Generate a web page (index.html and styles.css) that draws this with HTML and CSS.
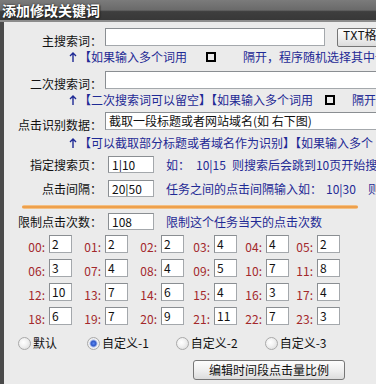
FILE: index.html
```html
<!DOCTYPE html>
<html lang="zh-CN">
<head>
<meta charset="utf-8">
<title>添加修改关键词</title>
<link rel="stylesheet" href="styles.css">
</head>
<body>
<div class="win">
  <div class="titlebar">添加修改关键词</div>
  <div class="panel">
    <div class="row r1">
      <span class="lbl low">主搜索词：</span>
      <span class="field f-main"></span>
      <span class="btn btn-txt">TXT格式</span>
    </div>
    <div class="hint h1"><svg class="arr" width="12" height="12" viewBox="0 0 12 12"><path d="M6 11V2M3 5l3-3 3 3" fill="none" stroke="#1f2a95" stroke-width="1.4"/></svg>【如果输入多个词用<span class="sq sq1"></span><span class="after a1">隔开，程序随机选择其中一</span></div>
    <div class="row r3">
      <span class="lbl low">二次搜索词：</span>
      <span class="field f-long"></span>
    </div>
    <div class="hint h2"><svg class="arr" width="12" height="12" viewBox="0 0 12 12"><path d="M6 11V2M3 5l3-3 3 3" fill="none" stroke="#1f2a95" stroke-width="1.4"/></svg>【二次搜索词可以留空】【如果输入多个词用<span class="sq sq2"></span><span class="after a2">隔开</span></div>
    <div class="row r5">
      <span class="lbl low">点击识别数据：</span>
      <span class="field f-long">截取一段标题或者网站域名(如 右下图)</span>
    </div>
    <div class="hint h3"><svg class="arr" width="12" height="12" viewBox="0 0 12 12"><path d="M6 11V2M3 5l3-3 3 3" fill="none" stroke="#1f2a95" stroke-width="1.4"/></svg>【可以截取部分标题或者域名作为识别】【如果输入多个</div>
    <div class="row r7">
      <span class="lbl">指定搜索页：</span>
      <span class="field f-small">1|10</span>
      <span class="blue note">如：<span class="num">10|15</span>则搜索后会跳到10页开始搜</span>
    </div>
    <div class="row r8">
      <span class="lbl">点击间隔：</span>
      <span class="field f-small">20|50</span>
      <span class="blue note">任务之间的点击间隔输入如：<span class="num n2">10|30</span><span class="gap">则</span></span>
    </div>
    <div class="rule"></div>
    <div class="row r9">
      <span class="lbl">限制点击次数：</span>
      <span class="field f-small">108</span>
      <span class="blue note">限制这个任务当天的点击次数</span>
    </div>
    <div class="grid">
      <div class="cell"><span class="hr">00:</span><span class="field f-h">2</span></div>
      <div class="cell"><span class="hr">01:</span><span class="field f-h">2</span></div>
      <div class="cell"><span class="hr">02:</span><span class="field f-h">2</span></div>
      <div class="cell"><span class="hr">03:</span><span class="field f-h">4</span></div>
      <div class="cell"><span class="hr">04:</span><span class="field f-h">4</span></div>
      <div class="cell"><span class="hr">05:</span><span class="field f-h">2</span></div>
      <div class="cell"><span class="hr">06:</span><span class="field f-h">3</span></div>
      <div class="cell"><span class="hr">07:</span><span class="field f-h">4</span></div>
      <div class="cell"><span class="hr">08:</span><span class="field f-h">4</span></div>
      <div class="cell"><span class="hr">09:</span><span class="field f-h">5</span></div>
      <div class="cell"><span class="hr">10:</span><span class="field f-h">7</span></div>
      <div class="cell"><span class="hr">11:</span><span class="field f-h">8</span></div>
      <div class="cell"><span class="hr">12:</span><span class="field f-h">10</span></div>
      <div class="cell"><span class="hr">13:</span><span class="field f-h">7</span></div>
      <div class="cell"><span class="hr">14:</span><span class="field f-h">6</span></div>
      <div class="cell"><span class="hr">15:</span><span class="field f-h">4</span></div>
      <div class="cell"><span class="hr">16:</span><span class="field f-h">3</span></div>
      <div class="cell"><span class="hr">17:</span><span class="field f-h">4</span></div>
      <div class="cell"><span class="hr">18:</span><span class="field f-h">6</span></div>
      <div class="cell"><span class="hr">19:</span><span class="field f-h">7</span></div>
      <div class="cell"><span class="hr">20:</span><span class="field f-h">9</span></div>
      <div class="cell"><span class="hr">21:</span><span class="field f-h">11</span></div>
      <div class="cell"><span class="hr">22:</span><span class="field f-h">7</span></div>
      <div class="cell"><span class="hr">23:</span><span class="field f-h">3</span></div>
    </div>
    <div class="radios">
      <span class="opt o1"><span class="radio"></span>默认</span>
      <span class="opt"><span class="radio on"></span>自定义-1</span>
      <span class="opt"><span class="radio"></span>自定义-2</span>
      <span class="opt"><span class="radio"></span>自定义-3</span>
    </div>
    <div class="btn btn-edit">编辑时间段点击量比例</div>
  </div>
</div>
</body>
</html>
```

FILE: styles.css
```css
* { box-sizing: border-box; margin: 0; padding: 0; }
html, body { width: 376px; height: 384px; overflow: hidden; background: #ebebeb; }
body {
  font-family: "Noto Sans CJK SC", "Liberation Sans", sans-serif;
  font-size: 12px;
  color: #111;
}
.win { width: 376px; height: 384px; display: flex; flex-direction: column; overflow: hidden; }
.titlebar {
  height: 22px;
  line-height: 20px;
  padding-left: 2px;
  color: #fff;
  font-size: 14px;
  font-weight: bold;
  text-shadow: 0 0 2px #222, 1px 1px 1px #222;
  background: linear-gradient(#7b7b7b 0, #6a6a6a 50%, #3e3e3e 58%, #383838 100%);
  border-bottom: 2px solid #8c8c8c;
}
.panel {
  flex: 1;
  background: #ebebeb;
  border-left: 4px solid #4a4a4a;
  display: flex;
  flex-direction: column;
  white-space: nowrap;
  overflow: hidden;
}
.row { display: flex; align-items: center; height: 18px; flex: none; }
.lbl { width: 98px; flex: none; text-align: right; line-height: 14px; color: #111; }
.lbl.low { padding-top: 8px; }
.field {
  flex: none;
  display: block;
  height: 100%;
  background: #fff;
  border: 1px solid #a4a8ac;
  border-top-color: #8a8e92;
  border-left-color: #8a8e92;
  padding-left: 3px;
  line-height: 15px;
  color: #111;
  overflow: hidden;
}
.f-main { width: 220px; margin-left: 3px; }
.f-long { width: 290px; margin-left: 3px; }
.f-small { width: 46px; margin-left: 6px; }
.btn {
  flex: none;
  background: linear-gradient(#fdfdfd, #eeeeee 55%, #dcdcdc);
  border: 1px solid #767676;
  border-radius: 2px;
  color: #111;
  text-align: center;
}
.btn-txt {
  margin-left: 12px;
  width: 62px;
  height: 19px;
  line-height: 17px;
  text-align: left;
  padding-left: 5px;
  font-family: "Liberation Mono", "Noto Sans CJK SC", monospace;
}
.blue { color: #1f2a95; }
.hint {
  flex: none;
  height: 14px;
  line-height: 14px;
  padding-left: 63px;
  color: #1f2a95;
  display: flex;
  align-items: center;
}
.arr { display: block; flex: none; width: 12px; height: 12px; }
.sq { display: inline-block; width: 10px; height: 10px; border: 2px solid #000; flex: none; }
.sq1 { margin-left: 19px; }
.a1 { margin-left: 27px; }
.sq2 { margin-left: 12px; }
.a2 { margin-left: 17px; }
.r1 { margin-top: 6px; }
.h1 { margin-top: 4px; }
.r3 { margin-top: 7px; }
.h2 { margin-top: 4px; }
.r5 { margin-top: 5px; }
.h3 { margin-top: 6px; }
.r7 { margin-top: 6px; height: 17px; }
.r8 { margin-top: 7px; height: 17px; }
.r9 { margin-top: 4px; height: 17px; }
.note { margin-left: 12px; line-height: 14px; }
.num { margin-left: 6px; margin-right: 6px; }
.num.n2 { margin-left: 4px; margin-right: 0; }
.gap { margin-left: 12px; }
.rule {
  flex: none;
  margin-top: 8px;
  margin-left: 18px;
  width: 336px;
  height: 4px;
  border-radius: 2px;
  background: linear-gradient(#f7d2a2, #eea04c 35%, #eea04c 65%, #f7d2a2);
}
.grid {
  flex: none;
  margin-top: 5px;
  display: grid;
  grid-template-columns: 68px 56px 56px 53px 52px 51px;
  grid-auto-rows: 18px;
  row-gap: 6px;
}
.cell { display: flex; justify-content: flex-end; align-items: center; height: 18px; }
.hr { color: #a3282b; margin-right: 4px; line-height: 14px; padding-top: 5px; }
.f-h { width: 23px; padding-left: 2px; }
.radios {
  flex: none;
  margin-top: 11px;
  margin-left: 14px;
  height: 14px;
  display: flex;
  align-items: center;
  gap: 27px;
}
.o1 { margin-right: 3px; }
.opt { display: flex; align-items: center; line-height: 14px; color: #111; }
.radio {
  width: 13px;
  height: 13px;
  border-radius: 50%;
  border: 1px solid #a9a9a9;
  background: radial-gradient(circle at 40% 40%, #ffffff 0, #f2f2f2 40%, #d6d6d6 100%);
  margin-right: 2px;
  flex: none;
}
.radio.on {
  background: radial-gradient(circle at 50% 50%, #5a86f0 0, #2f58c8 2.5px, #aabbe8 3.5px, #f4f4f4 4.5px, #dcdcdc 100%);
}
.btn-edit {
  margin-top: 10px;
  margin-left: 189px;
  width: 152px;
  height: 20px;
  line-height: 18px;
  border-radius: 3px;
}
```
